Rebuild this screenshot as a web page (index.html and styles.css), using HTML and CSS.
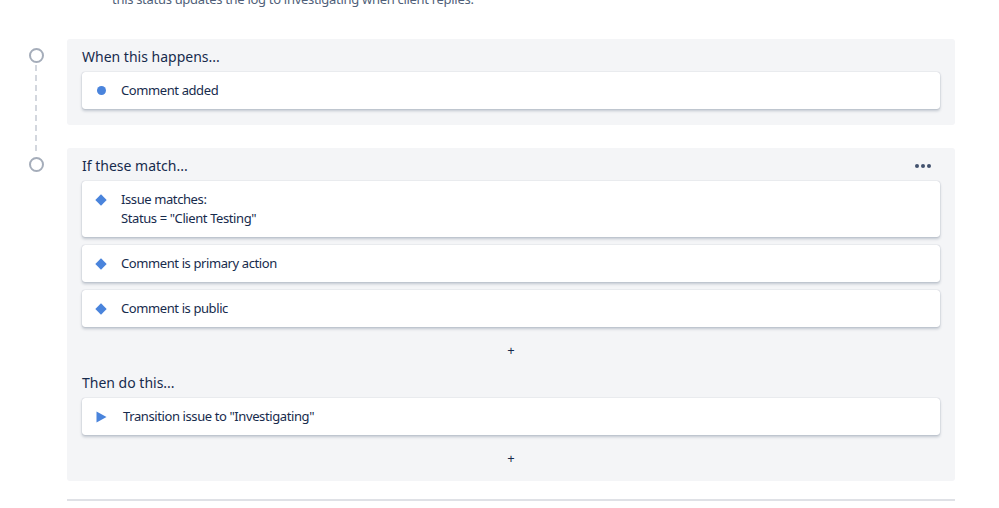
FILE: index.html
```html
<!DOCTYPE html>
<html lang="en">
<head>
  <meta charset="UTF-8">
  <meta name="viewport" content="width=device-width, initial-scale=1.0">
  <title>Rule details</title>
  <link rel="stylesheet" href="styles.css">
</head>
<body>
  <div class="page">
    <p class="description">this status updates the log to investigating when client replies.</p>

    <div class="flow">
      <!-- Trigger -->
      <div class="step">
        <div class="rail">
          <span class="node"></span>
          <span class="dash"></span>
        </div>
        <section class="panel">
          <div class="panel-head">
            <h3>When this happens...</h3>
          </div>
          <div class="card">
            <span class="icon"><span class="dot"></span></span>
            <span class="card-text">Comment added</span>
          </div>
        </section>
      </div>

      <!-- Conditions + actions -->
      <div class="step">
        <div class="rail">
          <span class="node"></span>
        </div>
        <section class="panel">
          <div class="panel-head">
            <h3>If these match...</h3>
            <button class="more" title="More"><i></i><i></i><i></i></button>
          </div>
          <div class="card">
            <span class="icon"><span class="diamond"></span></span>
            <span class="card-text">Issue matches:<br>Status = "Client Testing"</span>
          </div>
          <div class="card">
            <span class="icon"><span class="diamond"></span></span>
            <span class="card-text">Comment is primary action</span>
          </div>
          <div class="card">
            <span class="icon"><span class="diamond"></span></span>
            <span class="card-text">Comment is public</span>
          </div>
          <div class="add-row"><button class="add">+</button></div>

          <div class="panel-head then">
            <h3>Then do this...</h3>
          </div>
          <div class="card">
            <span class="icon">
              <svg class="play" width="11" height="12" viewBox="0 0 11 12"><path d="M0.5 0.5 L10.5 6 L0.5 11.5 Z" fill="#4a84dc"/></svg>
            </span>
            <span class="card-text action">Transition issue to "Investigating"</span>
          </div>
          <div class="add-row"><button class="add">+</button></div>
        </section>
      </div>
    </div>

    <div class="divider"></div>
  </div>
</body>
</html>
```

FILE: styles.css
```css
* {
  margin: 0;
  padding: 0;
  box-sizing: border-box;
}
body {
  font-family: "Noto Sans", "Open Sans", Arial, sans-serif;
  background-color: #ffffff;
  color: #172b4d;
}

.page {
  width: 955px;
}

.description {
  margin: -10px 0 0 112px;
  font-size: 13px;
  line-height: 18px;
  letter-spacing: -0.3px;
  color: #505f79;
}

.flow {
  margin-top: 31px;
}

.step {
  display: grid;
  grid-template-columns: 67px 888px;
}

.rail {
  display: flex;
  flex-direction: column;
  align-items: center;
  padding: 9px 0 0 5px;
}
.node {
  width: 15px;
  height: 15px;
  border: 2px solid #a5adba;
  border-radius: 50%;
  background-color: #fff;
  flex-shrink: 0;
}
.dash {
  flex: 1;
  width: 2px;
  margin: 2px 0 -4px;
  background: repeating-linear-gradient(to bottom, #d3d7de 0 6px, transparent 6px 10px);
}

.panel {
  background-color: #f4f5f7;
  border-radius: 3px;
  padding: 8px 15px 16px 15px;
}
.step:not(:last-child) .panel {
  margin-bottom: 23px;
}
.step:last-child .panel {
  padding-bottom: 11px;
}

.panel-head {
  display: flex;
  align-items: center;
  justify-content: space-between;
  height: 20px;
  margin-bottom: 5px;
}
.panel-head h3 {
  font-size: 14px;
  font-weight: 400;
  line-height: 20px;
  color: #172b4d;
}
.panel-head.then {
  margin-top: 11px;
}

.more {
  display: flex;
  gap: 2px;
  margin-right: 9px;
  border: none;
  background: none;
  cursor: pointer;
}
.more i {
  width: 4px;
  height: 4px;
  border-radius: 50%;
  background-color: #42526e;
}

.card {
  display: flex;
  align-items: flex-start;
  gap: 8px;
  background-color: #fff;
  border-radius: 3px;
  box-shadow: 0 2px 3px rgba(9, 30, 66, 0.22), 0 0 1px rgba(9, 30, 66, 0.35);
  padding: 9px 12px 9px 7px;
}
.card + .card {
  margin-top: 8px;
}

.icon {
  width: 24px;
  height: 19px;
  display: flex;
  align-items: center;
  justify-content: center;
  flex-shrink: 0;
}
.dot {
  width: 9px;
  height: 9px;
  border-radius: 50%;
  background-color: #4a84dc;
}
.diamond {
  width: 8px;
  height: 8px;
  background-color: #4a84dc;
  transform: rotate(45deg);
}
.play {
  margin-left: 1px;
}

.card-text {
  font-size: 13px;
  line-height: 19px;
  letter-spacing: -0.4px;
  color: #172b4d;
}
.card-text.action {
  margin-left: 2px;
}

.add-row {
  display: flex;
  justify-content: center;
  height: 24px;
  margin-top: 11px;
}
.add {
  border: none;
  background: none;
  font-family: inherit;
  font-size: 13px;
  line-height: 24px;
  color: #172b4d;
  cursor: pointer;
}

.divider {
  margin: 18px 0 0 67px;
  height: 2px;
  background-color: #dfe1e6;
}
```
